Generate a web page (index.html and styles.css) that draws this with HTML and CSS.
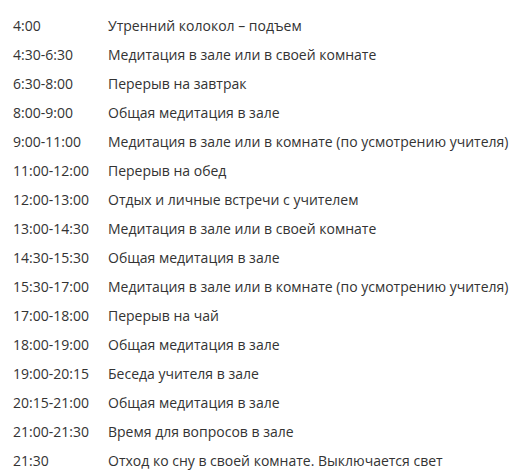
FILE: index.html
```html
<!DOCTYPE html>
<html lang="ru">
<head>
<meta charset="utf-8">
<link rel="stylesheet" href="styles.css">
</head>
<body>
<div class="schedule">
  <div class="time">4:00</div><div class="act">Утренний колокол – подъем</div>
  <div class="time">4:30-6:30</div><div class="act">Медитация в зале или в своей комнате</div>
  <div class="time">6:30-8:00</div><div class="act">Перерыв на завтрак</div>
  <div class="time">8:00-9:00</div><div class="act">Общая медитация в зале</div>
  <div class="time">9:00-11:00</div><div class="act">Медитация в зале или в комнате (по усмотрению учителя)</div>
  <div class="time">11:00-12:00</div><div class="act">Перерыв на обед</div>
  <div class="time">12:00-13:00</div><div class="act">Отдых и личные встречи с учителем</div>
  <div class="time">13:00-14:30</div><div class="act">Медитация в зале или в своей комнате</div>
  <div class="time">14:30-15:30</div><div class="act">Общая медитация в зале</div>
  <div class="time">15:30-17:00</div><div class="act">Медитация в зале или в комнате (по усмотрению учителя)</div>
  <div class="time">17:00-18:00</div><div class="act">Перерыв на чай</div>
  <div class="time">18:00-19:00</div><div class="act">Общая медитация в зале</div>
  <div class="time">19:00-20:15</div><div class="act">Беседа учителя в зале</div>
  <div class="time">20:15-21:00</div><div class="act">Общая медитация в зале</div>
  <div class="time">21:00-21:30</div><div class="act">Время для вопросов в зале</div>
  <div class="time">21:30</div><div class="act">Отход ко сну в своей комнате. Выключается свет</div>
</div>
</body>
</html>
```
FILE: styles.css
```css
html, body {
  margin: 0;
  padding: 0;
  background: #fff;
}
body {
  font-family: "Open Sans", sans-serif;
  font-size: 14px;
  color: #333;
}
.schedule {
  display: grid;
  grid-template-columns: 95px auto;
  grid-auto-rows: 29px;
  align-items: center;
  padding: 11px 0 0 13px;
}
.time, .act {
  line-height: 19px;
  white-space: nowrap;
}
```
